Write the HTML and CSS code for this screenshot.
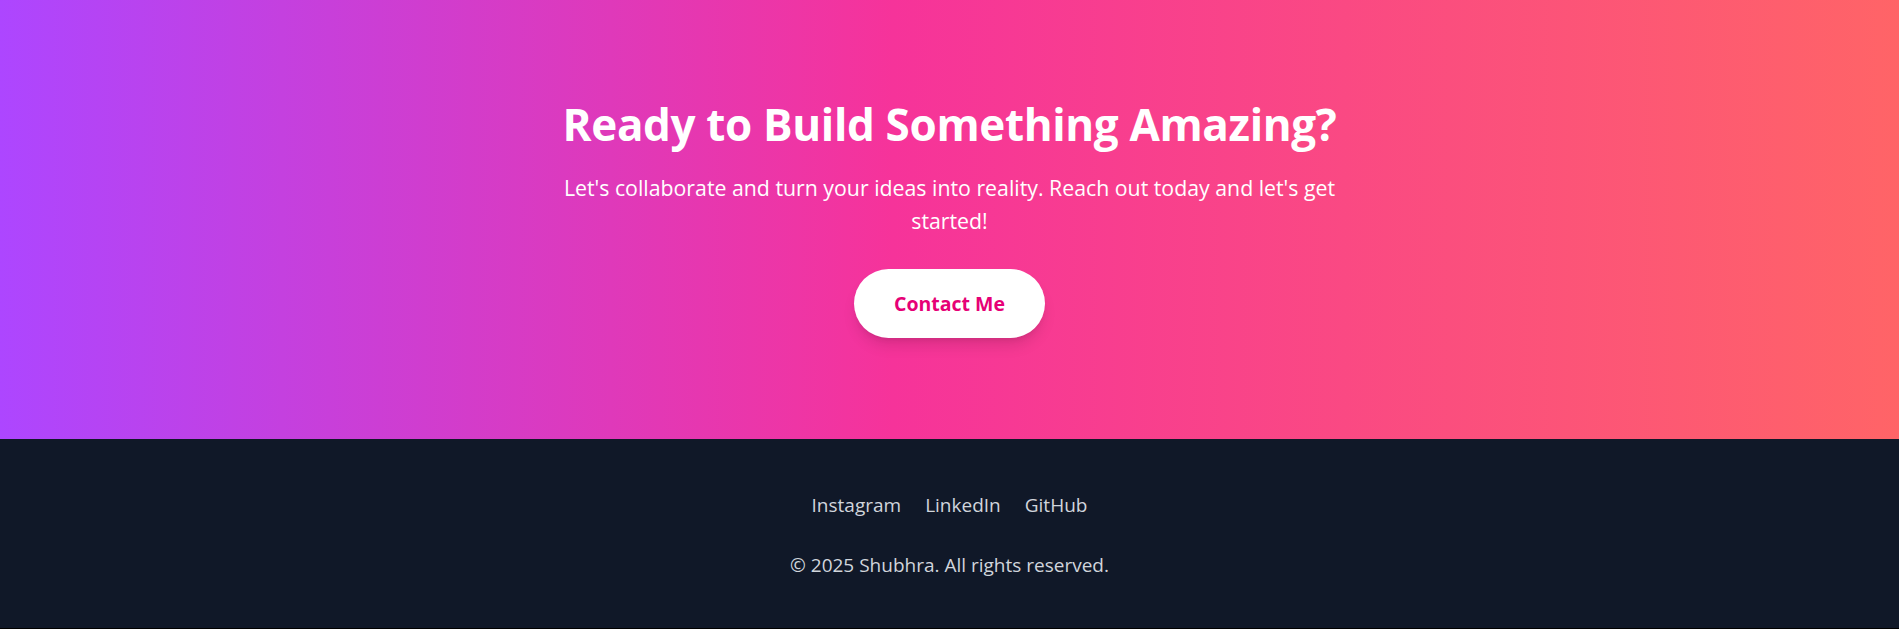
FILE: index.html
```html
<!DOCTYPE html>
<html lang="en">
<head>
<meta charset="utf-8">
<title>Contact</title>
<link rel="stylesheet" href="styles.css">
</head>
<body>
  <section class="cta">
    <h2 class="cta-title">Ready to Build Something Amazing?</h2>
    <p class="cta-text">Let's collaborate and turn your ideas into reality. Reach out today and let's get started!</p>
    <a class="cta-button" href="#contact">Contact Me</a>
  </section>
  <footer class="footer">
    <nav class="footer-links">
      <a href="#">Instagram</a>
      <a href="#">LinkedIn</a>
      <a href="#">GitHub</a>
    </nav>
    <p class="footer-copy">© 2025 Shubhra. All rights reserved.</p>
  </footer>
</body>
</html>
```

FILE: styles.css
```css
html {
  background: #000;
}
body {
  margin: 0;
  font-family: "Open Sans", "Noto Sans", "Liberation Sans", sans-serif;
}
.cta {
  display: flex;
  flex-direction: column;
  align-items: center;
  text-align: center;
  padding: 100px 24px 101px;
  background: linear-gradient(to right, #ad46ff 0%, #f6339a 47%, #ff6467 100%);
  color: #fff;
}
.cta-title {
  margin: 0 0 23px;
  font-size: 44px;
  line-height: 48px;
  font-weight: 700;
  letter-spacing: -0.35px;
}
.cta-text {
  margin: 0 0 32px;
  max-width: 800px;
  font-size: 21.3px;
  line-height: 33px;
}
.cta-button {
  display: inline-block;
  padding: 20px 40px;
  border-radius: 999px;
  background: #fff;
  color: #e60076;
  font-size: 19.5px;
  font-weight: 700;
  line-height: 29px;
  text-decoration: none;
  box-shadow: 0 10px 15px -3px rgba(0, 0, 0, 0.12), 0 4px 6px -4px rgba(0, 0, 0, 0.12);
}
.footer {
  background: #101828;
  color: #d1d5dc;
  text-align: center;
  padding: 52px 24px 49px;
}
.footer-links {
  display: flex;
  justify-content: center;
  gap: 24px;
  font-size: 19px;
  line-height: 28px;
}
.footer-links a {
  color: #d1d5dc;
  text-decoration: none;
}
.footer-copy {
  margin: 32px 0 0;
  font-size: 19px;
  line-height: 28px;
}
```
